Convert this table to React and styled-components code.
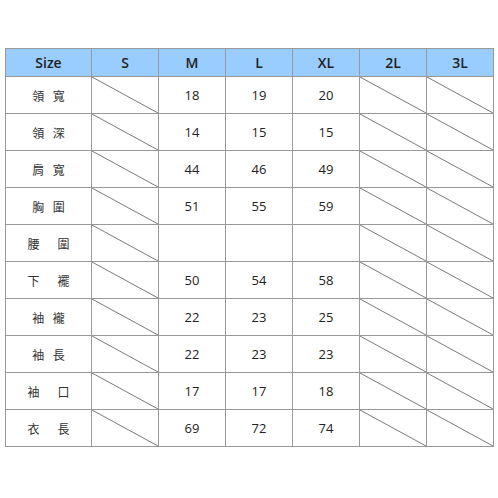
import React from "react";
import styled, { createGlobalStyle } from "styled-components";

const GlobalStyle = createGlobalStyle`
  html, body {
    margin: 0;
    padding: 0;
    background: #fff;
  }
`;

const sizes = ["S", "M", "L", "XL", "2L", "3L"];

const rows = [
  { label: "領 寬", values: [null, 18, 19, 20, null, null] },
  { label: "領 深", values: [null, 14, 15, 15, null, null] },
  { label: "肩 寬", values: [null, 44, 46, 49, null, null] },
  { label: "胸 圍", values: [null, 51, 55, 59, null, null] },
  { label: "腰　圍", values: [null, "", "", "", null, null] },
  { label: "下　襬", values: [null, 50, 54, 58, null, null] },
  { label: "袖 襱", values: [null, 22, 23, 25, null, null] },
  { label: "袖 長", values: [null, 22, 23, 23, null, null] },
  { label: "袖　口", values: [null, 17, 17, 18, null, null] },
  { label: "衣　長", values: [null, 69, 72, 74, null, null] },
];

const Slash = () => (
  <SlashSvg viewBox="0 0 100 100" preserveAspectRatio="none">
    <line
      x1="0"
      y1="0"
      x2="100"
      y2="100"
      stroke="#7a7a7a"
      strokeWidth="1"
      vectorEffect="non-scaling-stroke"
    />
  </SlashSvg>
);

export default function App() {
  return (
    <Page>
      <GlobalStyle />
      <SizeTable>
        <colgroup>
          <col style={{ width: 86 }} />
          {sizes.map((s) => (
            <col key={s} style={{ width: 67 }} />
          ))}
        </colgroup>
        <thead>
          <tr>
            <HeadCell>Size</HeadCell>
            {sizes.map((s) => (
              <HeadCell key={s}>{s}</HeadCell>
            ))}
          </tr>
        </thead>
        <tbody>
          {rows.map((row) => (
            <tr key={row.label}>
              <LabelCell>{row.label}</LabelCell>
              {row.values.map((v, i) =>
                v === null ? (
                  <Cell key={i}>
                    <Slash />
                  </Cell>
                ) : (
                  <Cell key={i}>{v}</Cell>
                )
              )}
            </tr>
          ))}
        </tbody>
      </SizeTable>
    </Page>
  );
}

const Page = styled.div`
  width: 498px;
  height: 498px;
  padding: 48px 0 0 5px;
  box-sizing: border-box;
`;

const SizeTable = styled.table`
  border-collapse: collapse;
  table-layout: fixed;
  width: 488px;
  font-family: "Open Sans", "DejaVu Sans", sans-serif;
  color: #222;
`;

const HeadCell = styled.th`
  height: 27px;
  padding: 0;
  background: #99ccff;
  border: 1px solid #999;
  font-size: 14px;
  font-weight: 600;
  text-align: center;
  vertical-align: middle;
`;

const Cell = styled.td`
  position: relative;
  height: 36px;
  padding: 0;
  border: 1px solid #999;
  font-size: 13px;
  text-align: center;
  vertical-align: middle;
  background: #fff;
`;

const SlashSvg = styled.svg`
  position: absolute;
  inset: 0;
  width: 100%;
  height: 100%;
  display: block;
`;

const LabelCell = styled(Cell)`
  font-family: "Noto Sans CJK TC", sans-serif;
  font-size: 12px;
  letter-spacing: 3px;
  color: #333;
  padding-left: 3px;
`;
